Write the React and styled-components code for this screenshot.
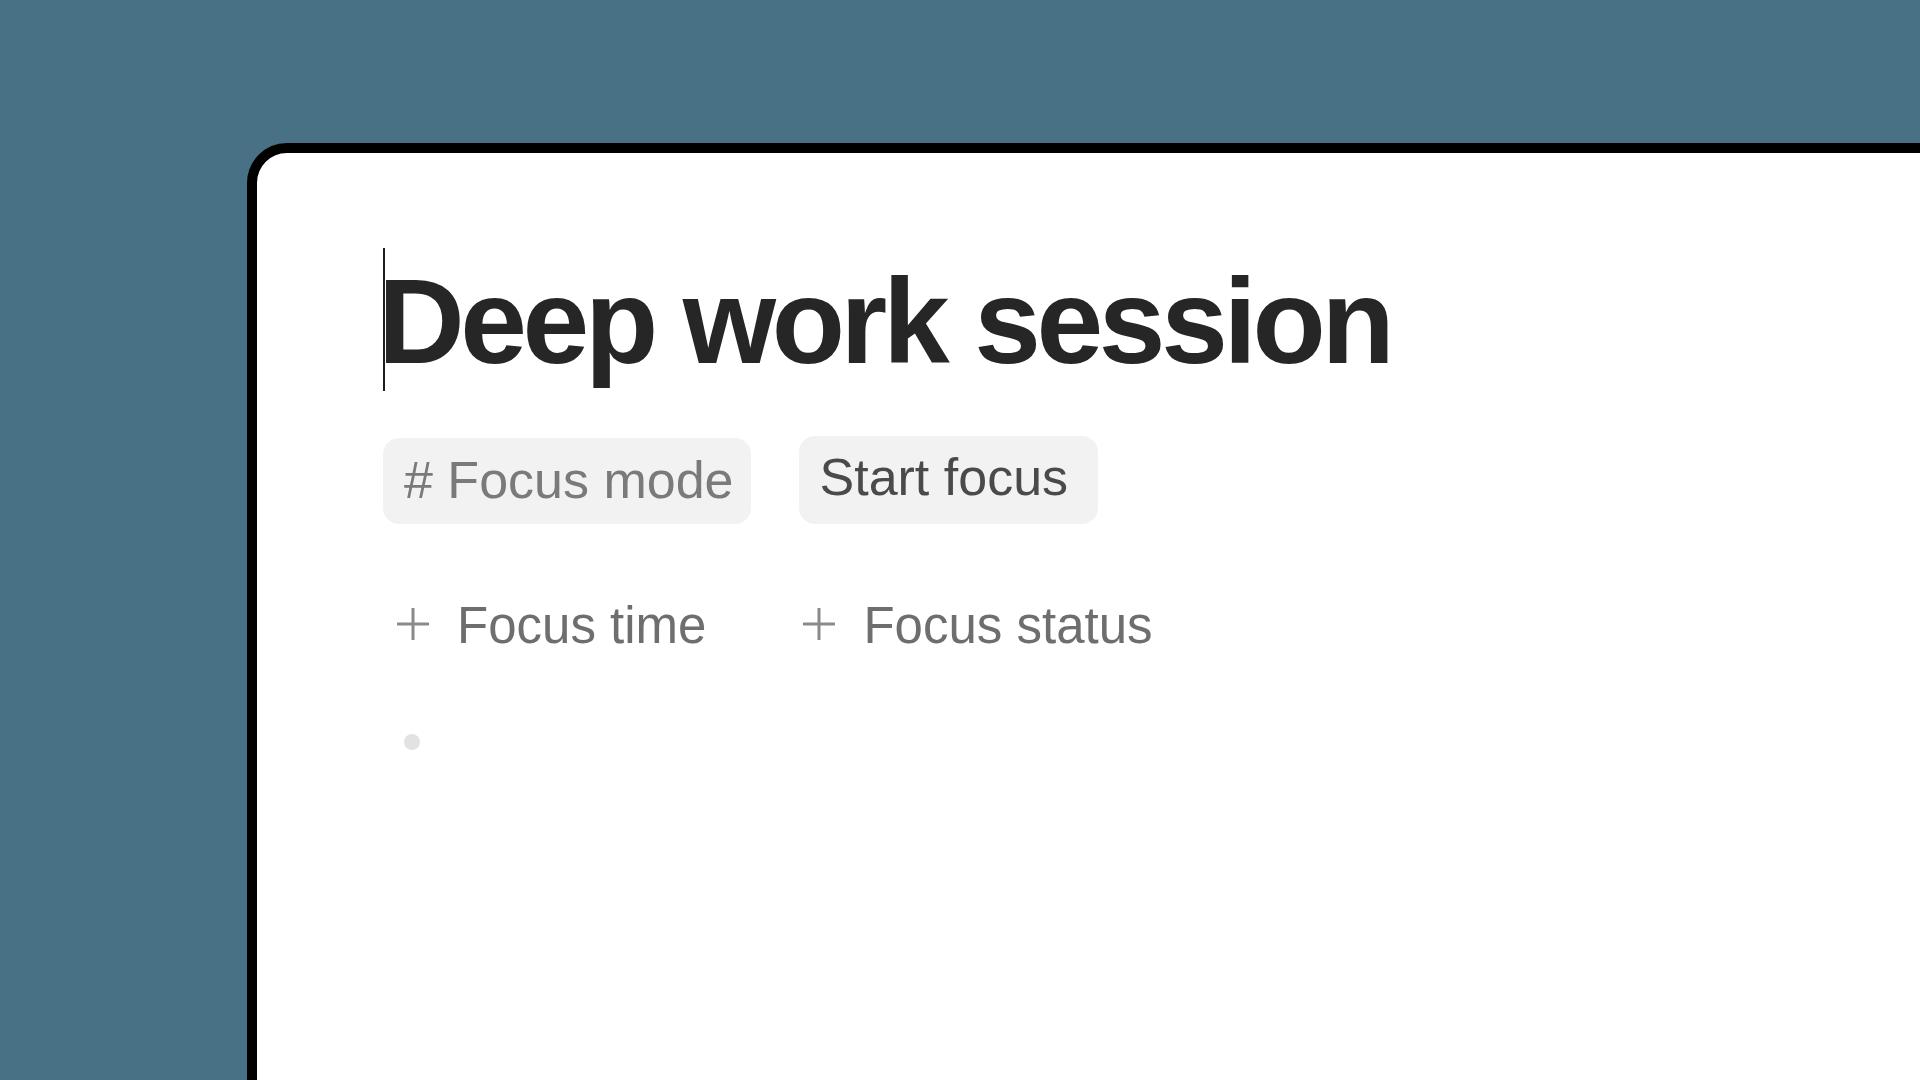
import React from "react";
import styled, { createGlobalStyle } from "styled-components";

const GlobalStyle = createGlobalStyle`
  html, body {
    margin: 0;
    padding: 0;
    width: 100%;
    height: 100%;
    overflow: hidden;
    background: #487186;
    font-family: "Liberation Sans", Arial, Helvetica, sans-serif;
  }
  #root { width: 100%; height: 100%; }
`;

const Stage = styled.div`
  width: 1920px;
  height: 1080px;
  padding: 143px 0 0 247px;
  box-sizing: border-box;
  overflow: hidden;
`;

const Window = styled.div`
  width: 1800px;
  height: 1100px;
  background: #ffffff;
  border: 10px solid #000000;
  border-radius: 40px;
  box-sizing: border-box;
  padding: 97px 0 0 126px;
  display: flex;
  flex-direction: column;
  align-items: flex-start;
`;

const Title = styled.h1`
  position: relative;
  margin: 0 0 43px -5px;
  font-size: 120px;
  line-height: 143px;
  font-weight: 700;
  letter-spacing: -4.4px;
  color: #262626;
  white-space: nowrap;

  &::before {
    content: "";
    position: absolute;
    left: 5px;
    top: -2px;
    width: 2px;
    height: 143px;
    background: #1e1e1e;
  }
`;

const PillRow = styled.div`
  display: flex;
  align-items: flex-end;
  gap: 48px;
  margin-bottom: 72px;
`;

const Pill = styled.div`
  display: flex;
  align-items: center;
  height: ${(p) => p.$h}px;
  box-sizing: border-box;
  padding: 0 ${(p) => p.$pr}px ${(p) => p.$pb || 0}px 21px;
  background: #f2f2f2;
  border-radius: 16px;
  font-size: 52px;
  line-height: 58px;
  color: ${(p) => p.$color};
  white-space: nowrap;
`;

const PropRow = styled.div`
  display: flex;
  align-items: center;
  gap: 71px;
  margin-bottom: 78px;
`;

const PropButton = styled.div`
  display: flex;
  align-items: center;
  gap: 27px;
  height: 60px;
  padding: 0 12px 0 13px;
  font-size: 51px;
  line-height: 60px;
  color: #6e6e6e;
  white-space: nowrap;
`;

const PlusIcon = styled.svg`
  width: 34px;
  height: 34px;
  flex: none;
  margin-top: -5px;
`;

const Dot = styled.div`
  width: 16px;
  height: 16px;
  margin-left: 21px;
  border-radius: 50%;
  background: #e2e2e2;
`;

const Plus = () => (
  <PlusIcon viewBox="0 0 34 34">
    <path d="M17 1 V33 M1 17 H33" stroke="#8a8a8a" strokeWidth="3" fill="none" />
  </PlusIcon>
);

export default function App() {
  return (
    <>
      <GlobalStyle />
      <Stage>
        <Window>
          <Title>Deep work session</Title>
          <PillRow>
            <Pill $h={86} $pr={17} $pb={2} $color="#7a7a7a"># Focus mode</Pill>
            <Pill $h={88} $pr={30} $pb={6} $color="#4a4a4a">Start focus</Pill>
          </PillRow>
          <PropRow>
            <PropButton>
              <Plus />
              Focus time
            </PropButton>
            <PropButton>
              <Plus />
              Focus status
            </PropButton>
          </PropRow>
          <Dot />
        </Window>
      </Stage>
    </>
  );
}
